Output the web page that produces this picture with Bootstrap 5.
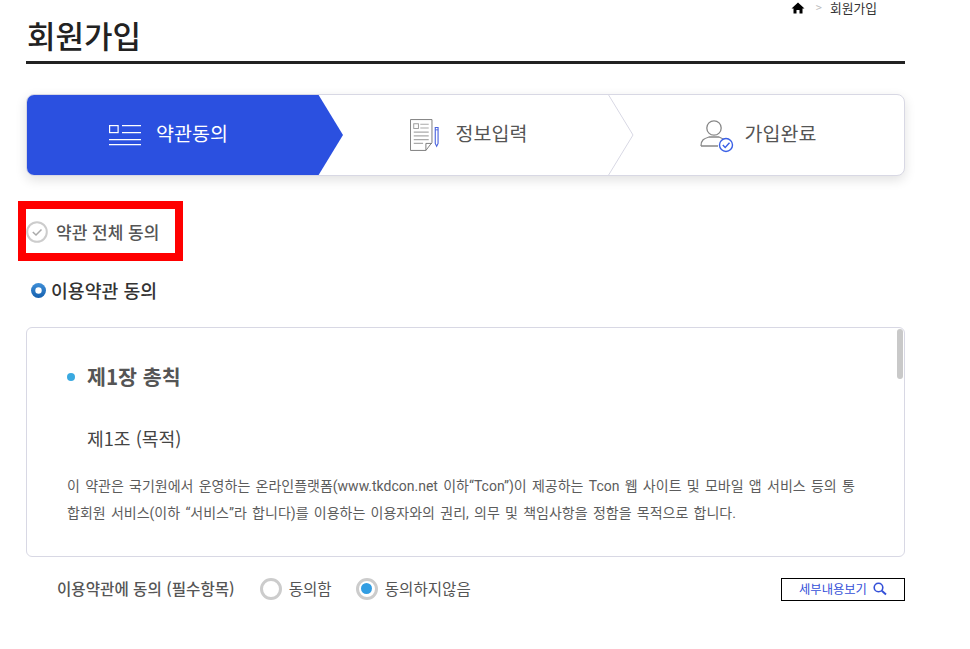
<!DOCTYPE html>
<html lang="ko">
<head>
<meta charset="utf-8">
<title>회원가입</title>
<link href="https://cdn.jsdelivr.net/npm/bootstrap@5.3.0/dist/css/bootstrap.min.css" rel="stylesheet">
<style>
html,body{height:649px;overflow:hidden}
body{font-family:"Noto Sans CJK KR","Noto Sans",sans-serif;background:#fff;color:#222}
.page-wrap{width:879px;margin-left:26px}
.crumbs{height:15px;padding-right:28px;font-size:12.8px;line-height:13px;color:#333}
.crumb-sep{color:#bbb;margin:0 8px 0 11px;font-size:11px}
.page-title{font-size:31px;font-weight:500;line-height:40px;height:49px;margin:0;padding-left:1px;border-bottom:3px solid #222;color:#222}
.steps{height:82px;margin-top:30px;border:1px solid #d8d8e4;border-radius:8px;box-shadow:0 4px 12px rgba(0,0,0,.12);position:relative;overflow:hidden;background:#fff}
.step-item{font-size:19.5px;color:#555;height:100%;gap:17px}
.step-item span{margin-top:-4px}
.step-a{width:316px;background:#2b50e0;color:#fff;clip-path:polygon(0 0,291px 0,316px 50%,291px 100%,0 100%);padding-right:33px;gap:15px;margin-top:-1px;height:82px}
.step-b{width:291px;padding-right:40px}
.step-c{flex:1;padding-right:22px;gap:11px}
.step-c svg{margin-top:2px}
.step-sep{position:absolute;top:-1px;left:581px}
.allagree{width:165px;height:60px;margin-top:25px;margin-left:-8px;border:8px solid #f00;font-size:17px;font-weight:500;color:#555;gap:8px;padding-top:2px}
.sec-head{font-size:18.3px;font-weight:500;color:#333;margin-top:15px;margin-left:5px;gap:5px;line-height:28px}
.terms-box{height:230px;margin-top:23px;border:1px solid #d8d8e4;border-radius:6px;position:relative;overflow:hidden;padding:33px 40px 0 40px}
.terms-thumb{position:absolute;top:1px;right:1px;width:6px;height:50px;background:#c9c9c9;border-radius:3px}
.chap{font-size:20.6px;font-weight:700;color:#555;line-height:30px;padding-left:20px;position:relative}
.chap-dot{position:absolute;left:0;top:12px;width:8px;height:8px;border-radius:50%;background:#3aa9e0}
.art{font-size:18.2px;color:#444;line-height:28px;margin-top:33px;padding-left:20px}
.terms-txt{font-family:Roboto,"Noto Sans CJK KR",sans-serif;font-size:14px;color:#5c5c5c;line-height:27px;margin:21px 0 0;width:790px;word-spacing:1.8px}
.agree-row{margin-top:19px;height:26px;padding-left:31px;font-size:15.6px;color:#555}
.agree-lbl{font-weight:500;font-size:15.6px;margin-right:25px}
.rdo{width:22px;height:22px;border:3px solid #ccc;border-radius:50%;background:#fff;display:inline-block;position:relative;margin-right:7px}
.rdo-on::after{content:"";position:absolute;left:2.5px;top:2.5px;width:11px;height:11px;border-radius:50%;background:#329de2}
.rdo-wrap{margin-right:24px}
.more-btn{margin-left:auto;width:124px;height:23px;border:1px solid #000;font-size:12.3px;color:#3450d8;gap:6px;text-decoration:none}
</style>
</head>
<body>
<div class="page-wrap">
  <div class="crumbs d-flex justify-content-end align-items-center">
    <svg width="14" height="12" viewBox="0 0 14 12"><path d="M7 .5 0.5 6.5H2.5V11.5H5.5V8H8.5V11.5H11.5V6.5H13.5Z" fill="#000"/></svg>
    <span class="crumb-sep">&gt;</span><span>회원가입</span>
  </div>
  <h1 class="page-title">회원가입</h1>

  <div class="steps d-flex">
    <div class="step-item step-a d-flex align-items-center justify-content-center">
      <svg width="32" height="22" viewBox="0 0 32 22" fill="none" stroke="#fff" stroke-width="1.2"><rect x=".6" y="1.6" width="8.5" height="7"/><path d="M13 1.6H32M13 8.6H32M0 15.6H32M0 20.6H32"/></svg>
      <span>약관동의</span>
    </div>
    <div class="step-item step-b d-flex align-items-center justify-content-center">
      <svg width="29" height="36" viewBox="0 0 31 36" fill="none"><path d="M.5 1.5H23.5V26L17 34.5H.5Z" stroke="#777"/><path d="M17 34.5V27H23.5" stroke="#777"/><rect x="4" y="6" width="5" height="5" stroke="#999"/><path d="M11 6.5H20M11 10.5H20M4 15H20M4 19H20M4 23H20M4 27H14" stroke="#aaa" stroke-width="1.3"/><path d="M27 10H30V27L28.5 30L27 27Z" stroke="#4a63dd" stroke-width="1.2"/><path d="M27 12.5H30" stroke="#4a63dd"/></svg>
      <span>정보입력</span>
    </div>
    <div class="step-item step-c d-flex align-items-center justify-content-center">
      <svg width="34" height="34" viewBox="0 0 34 34" fill="none"><circle cx="14" cy="9" r="7.2" stroke="#888" stroke-width="1.3"/><path d="M1 27C1 21 4 19.5 9 18H19C21.5 19 23 19.5 24 21M1 27H18" stroke="#888" stroke-width="1.3"/><circle cx="26" cy="26" r="6.5" fill="#fff" stroke="#3a60e6" stroke-width="1.4"/><path d="M22.8 26 25.2 28.5 29.5 23.8" stroke="#3a60e6" stroke-width="1.4"/></svg>
      <span>가입완료</span>
    </div>
    <svg class="step-sep" width="26" height="82" viewBox="0 0 26 82" fill="none"><path d="M0 0 25 41 0 82" stroke="#d8d8e4"/></svg>
  </div>

  <div class="allagree d-flex align-items-center">
    <svg width="22" height="22" viewBox="0 0 22 22" fill="none"><circle cx="11" cy="11" r="9.8" stroke="#ccc" stroke-width="2"/><path d="M6.8 11 10 14 15.5 8.5" stroke="#aaa" stroke-width="1.5"/></svg>
    <span>약관 전체 동의</span>
  </div>

  <div class="sec-head d-flex align-items-center">
    <svg width="15" height="15" viewBox="0 0 15 15"><defs><linearGradient id="rg" x1="0" y1="0" x2="0" y2="1"><stop offset="0" stop-color="#3f8fd8"/><stop offset="1" stop-color="#1560ae"/></linearGradient></defs><circle cx="7.5" cy="7.5" r="7.5" fill="url(#rg)"/><circle cx="7.5" cy="7.5" r="3.2" fill="#fff"/></svg>
    <span>이용약관 동의</span>
  </div>

  <div class="terms-box">
    <div class="terms-thumb"></div>
    <div class="chap"><span class="chap-dot"></span>제1장 총칙</div>
    <div class="art">제1조 (목적)</div>
    <p class="terms-txt">이 약관은 국기원에서 운영하는 온라인플랫폼(www.tkdcon.net 이하“Tcon”)이 제공하는 Tcon 웹 사이트 및 모바일 앱 서비스 등의 통합회원 서비스(이하 “서비스”라 합니다)를 이용하는 이용자와의 권리, 의무 및 책임사항을 정함을 목적으로 합니다.</p>
  </div>

  <div class="agree-row d-flex align-items-center">
    <span class="agree-lbl">이용약관에 동의 (필수항목)</span>
    <span class="rdo-wrap d-flex align-items-center"><span class="rdo"></span>동의함</span>
    <span class="d-flex align-items-center"><span class="rdo rdo-on"></span>동의하지않음</span>
    <a href="#" class="more-btn d-flex align-items-center justify-content-center">세부내용보기
      <svg width="14" height="14" viewBox="0 0 14 14" fill="none" stroke="#3450d8"><circle cx="5.5" cy="5.5" r="4.3" stroke-width="1.6"/><path d="M8.8 8.8 13 12.6" stroke-width="2"/></svg>
    </a>
  </div>
</div>
</body>
</html>
